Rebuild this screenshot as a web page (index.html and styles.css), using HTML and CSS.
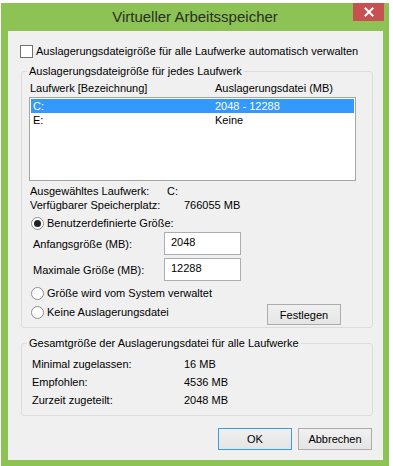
FILE: index.html
```html
<!DOCTYPE html>
<html lang="de">
<head>
    <meta charset="UTF-8">
    <meta name="viewport" content="width=device-width, initial-scale=1.0">
    <title>Virtueller Arbeitsspeicher</title>
    <link rel="stylesheet" href="styles.css">
</head>
<body>

    <div class="fenster">
        <!-- Titelleiste -->
        <div class="titelleiste">
            <span></span>
            <h1 class="titel">Virtueller Arbeitsspeicher</h1>
            <button class="schliessen" aria-label="Schließen">
                <svg width="10" height="10" viewBox="0 0 10 10">
                    <path d="M1.5 1.5 L8.5 8.5 M8.5 1.5 L1.5 8.5" stroke="#fff" stroke-width="2" stroke-linecap="square"/>
                </svg>
            </button>
        </div>

        <div class="inhalt">
            <div class="check-zeile">
                <span class="checkbox"></span>
                Auslagerungsdateigröße für alle Laufwerke automatisch verwalten
            </div>

            <!-- Laufwerke -->
            <fieldset class="gruppe laufwerke">
                <legend>Auslagerungsdateigröße für jedes Laufwerk</legend>
                <div class="liste-kopf">
                    <span>Laufwerk [Bezeichnung]</span>
                    <span>Auslagerungsdatei (MB)</span>
                </div>
                <div class="liste">
                    <div class="liste-zeile aktiv"><span>C:</span><span>2048 - 12288</span></div>
                    <div class="liste-zeile"><span>E:</span><span>Keine</span></div>
                </div>
                <div class="info">
                    <div class="info-zeile"><span class="info-name">Ausgewähltes Laufwerk:</span><span>C:</span></div>
                    <div class="info-zeile frei"><span class="info-name">Verfügbarer Speicherplatz:</span><span>766055 MB</span></div>
                </div>

                <div class="radio-zeile erste"><span class="radio an"></span>Benutzerdefinierte Größe:</div>
                <div class="groesse-zeile">
                    <span class="groesse-name">Anfangsgröße (MB):</span>
                    <span class="textfeld">2048</span>
                </div>
                <div class="groesse-zeile zweite">
                    <span class="groesse-name">Maximale Größe (MB):</span>
                    <span class="textfeld">12288</span>
                </div>
                <div class="radio-zeile"><span class="radio"></span>Größe wird vom System verwaltet</div>
                <div class="radio-zeile letzte">
                    <span class="radio-text"><span class="radio"></span>Keine Auslagerungsdatei</span>
                    <button class="knopf festlegen">Festlegen</button>
                </div>
            </fieldset>

            <!-- Gesamtgröße -->
            <fieldset class="gruppe gesamt">
                <legend>Gesamtgröße der Auslagerungsdatei für alle Laufwerke</legend>
                <div class="gesamt-zeile"><span class="gesamt-name">Minimal zugelassen:</span><span>16 MB</span></div>
                <div class="gesamt-zeile"><span class="gesamt-name">Empfohlen:</span><span>4536 MB</span></div>
                <div class="gesamt-zeile"><span class="gesamt-name">Zurzeit zugeteilt:</span><span>2048 MB</span></div>
            </fieldset>

            <div class="aktionen">
                <button class="knopf standard">OK</button>
                <button class="knopf">Abbrechen</button>
            </div>
        </div>
    </div>

</body>
</html>
```

FILE: styles.css
```css
body {
    margin: 0;
    background-color: #ffffff;
    font-family: "Liberation Sans", Arial, sans-serif;
    font-size: 11px;
    color: #000;
}

.fenster {
    width: 388px;
    margin: 3px 0 0 1px;
    background-color: #8dc254;
    padding-bottom: 6px;
}

.titelleiste {
    height: 28px;
    display: grid;
    grid-template-columns: 1fr auto 1fr;
}

.titel {
    margin: 0;
    font-weight: normal;
    font-size: 15px;
    line-height: 28px;
    color: #2a2f26;
    white-space: nowrap;
}

.schliessen {
    justify-self: end;
    width: 31px;
    height: 18px;
    margin-right: 5px;
    padding: 0;
    border: none;
    background-color: #c75050;
    display: flex;
    align-items: center;
    justify-content: center;
}

.inhalt {
    margin: 0 6px 0 7px;
    background-color: #f0f0f0;
    padding: 13px 0 10px;
}

.check-zeile {
    display: flex;
    align-items: center;
    line-height: 15px;
    margin-left: 12px;
    white-space: nowrap;
}

.checkbox {
    flex-shrink: 0;
    width: 11px;
    height: 11px;
    border: 1px solid #707070;
    background-color: #fff;
    margin-right: 3px;
}

.gruppe {
    margin: 5px 10px 0 13px;
    padding: 2px 16px 2px 7px;
    border: 1px solid #dcdcdc;
    border-radius: 3px;
    min-width: 0;
}

.gruppe legend {
    padding: 0 2px;
    margin-left: -2px;
    line-height: 15px;
    white-space: nowrap;
}

.liste-kopf {
    display: grid;
    grid-template-columns: 185px auto;
    line-height: 15px;
    padding-left: 1px;
}

.liste {
    margin-top: 1px;
    height: 80px;
    border: 1px solid #a5a5a5;
    background-color: #fff;
    padding: 1px;
}

.liste-zeile {
    display: grid;
    grid-template-columns: 182px auto;
    line-height: 14px;
    padding-left: 2px;
}

.liste-zeile.aktiv {
    background-color: #3399ff;
    color: #fff;
}

.info {
    margin-top: 3px;
    padding-left: 1px;
    line-height: 14px;
}

.info-zeile {
    display: flex;
}

.info-name {
    width: 137px;
}

.frei .info-name {
    width: 154px;
}

.radio-zeile {
    display: flex;
    align-items: center;
    line-height: 15px;
    padding-left: 2px;
    margin-top: 5px;
}

.radio-zeile.erste {
    margin-top: 4px;
}

.radio {
    flex-shrink: 0;
    width: 11px;
    height: 11px;
    border: 1px solid #8e8f8f;
    border-radius: 50%;
    background-color: #fff;
    margin-right: 3px;
    display: flex;
    align-items: center;
    justify-content: center;
}

.radio.an::after {
    content: "";
    width: 7px;
    height: 7px;
    border-radius: 50%;
    background-color: #222;
}

.radio-zeile.letzte {
    margin-top: 3px;
    align-items: flex-start;
}

.radio-text {
    display: flex;
    align-items: center;
    margin-top: 1px;
}

.groesse-zeile {
    display: flex;
    align-items: center;
    margin-top: 1px;
    padding-left: 4px;
}

.groesse-zeile.zweite {
    margin-top: 3px;
}

.groesse-name {
    width: 131px;
}

.textfeld {
    width: 69px;
    height: 18px;
    padding: 2px 0 1px 6px;
    line-height: 15px;
    border: 1px solid #abadb3;
    background-color: #fff;
}

.knopf {
    font-family: inherit;
    font-size: 11px;
    color: #000;
    width: 74px;
    height: 22px;
    padding: 0;
    border: 1px solid #acacac;
    background: linear-gradient(#f0f0f0, #e5e5e5);
}

.festlegen {
    height: 21px;
    margin-left: auto;
    margin-right: 15px;
}

.knopf.standard {
    border-color: #3c9ce0;
}

.gruppe.gesamt {
    margin-top: 8px;
    padding-top: 4px;
    padding-bottom: 6px;
}

.gesamt-zeile {
    display: flex;
    line-height: 18px;
    padding-left: 3px;
}

.gesamt-name {
    width: 152px;
}

.aktionen {
    display: flex;
    justify-content: flex-end;
    gap: 6px;
    margin: 12px 11px 0 0;
}
```
